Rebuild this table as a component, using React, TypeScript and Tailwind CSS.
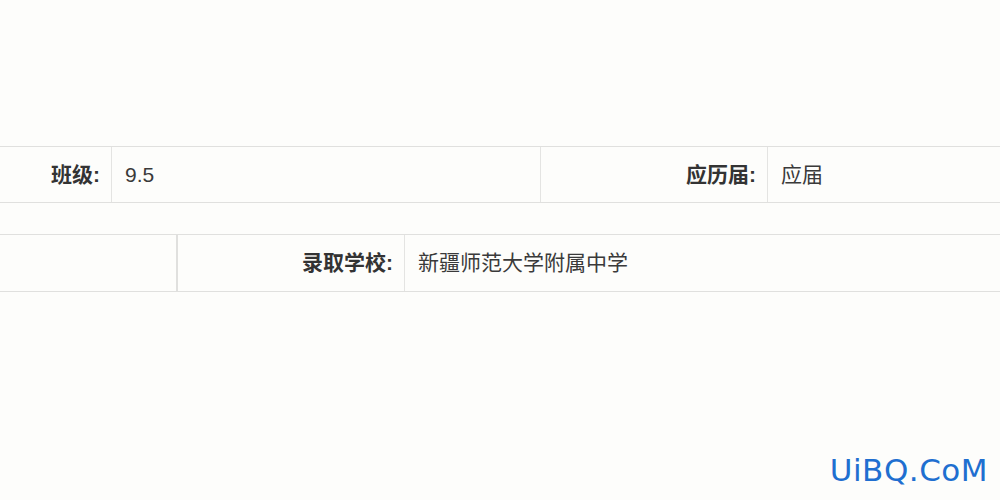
const font = '[font-family:"Liberation_Sans","Noto_Sans_CJK_SC",sans-serif]';

const Label = ({ text, w }: { text: string; w: string }) => (
  <div className={`${w} shrink-0 flex items-center justify-end pr-[11px] border-r border-[#e4e4e2] font-bold text-[#333] text-[21px]`}>
    {text}
  </div>
);

const Value = ({ text, w }: { text: string; w: string }) => (
  <div className={`${w} shrink-0 flex items-center pl-[13px] border-r border-[#e4e4e2] text-[#3a3a3a] text-[21px]`}>
    {text}
  </div>
);

export default function App() {
  return (
    <div className={`relative w-[1000px] h-[500px] overflow-hidden bg-[#fdfdfb] ${font}`}>
      <div className="pt-[146px]">
        {/* first table */}
        <div className="flex h-[57px] border-y border-[#e0e0de]">
          <Label text="班级:" w="w-[112px]" />
          <Value text="9.5" w="w-[429px]" />
          <Label text="应历届:" w="w-[227px]" />
          <Value text="应届" w="w-[300px]" />
        </div>

        {/* second table */}
        <div className="mt-[31px] flex h-[58px] border-y border-[#e0e0de]">
          <div className="w-[178px] shrink-0 border-r-2 border-[#e0e0de]" />
          <Label text="录取学校:" w="w-[227px]" />
          <Value text="新疆师范大学附属中学" w="w-[650px]" />
        </div>
      </div>

      <div className="absolute right-[12px] bottom-[7px] text-[#1f6fd0] text-[31px] tracking-[0.5px] [font-family:'DejaVu_Sans',sans-serif]">
        UiBQ.CoM
      </div>
    </div>
  );
}
